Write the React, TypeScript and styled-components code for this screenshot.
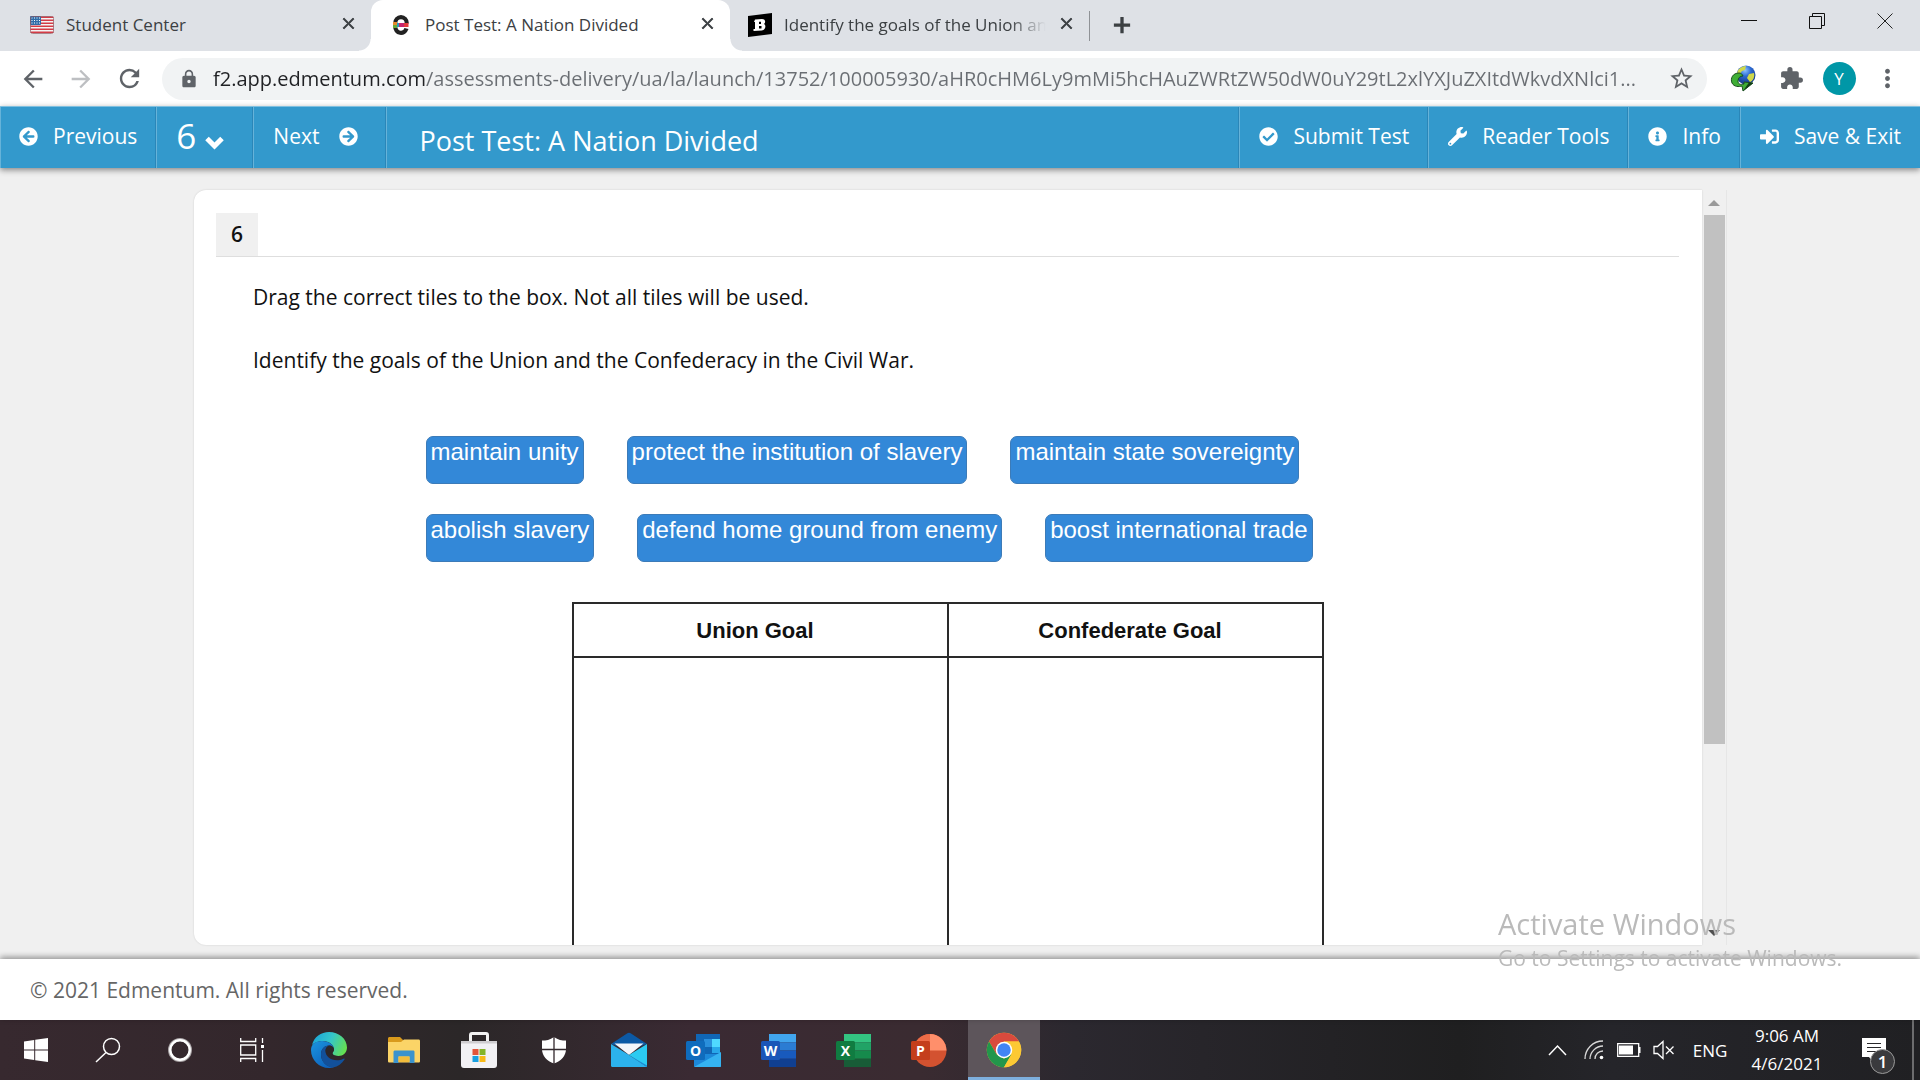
import React from "react";
import styled, { createGlobalStyle, css } from "styled-components";
import {
  FaArrowCircleLeft,
  FaArrowCircleRight,
  FaCheckCircle,
  FaInfoCircle,
  FaSignInAlt,
  FaWrench,
} from "react-icons/fa";
import {
  MdAdd,
  MdArrowBack,
  MdArrowForward,
  MdClose,
  MdExtension,
  MdLock,
  MdMoreVert,
  MdRefresh,
  MdStarBorder,
} from "react-icons/md";

const uiFont = `"Open Sans", "Noto Sans", sans-serif`;
const tileFont = `"Liberation Sans", Arial, sans-serif`;

const GlobalStyle = createGlobalStyle`
  *, *::before, *::after { box-sizing: border-box; }
  body { margin: 0; font-family: ${uiFont}; background: #f0f0f0; }
  button, input, select { font-family: inherit; }
  svg { display: block; flex: none; }
`;

const Screen = styled.div`
  display: flex;
  flex-direction: column;
  height: 100vh;
  overflow: hidden;
`;

const bareButton = css`
  display: flex;
  align-items: center;
  justify-content: center;
  padding: 0;
  border: 0;
  background: none;
  color: inherit;
  cursor: pointer;
`;

/* ---------- Browser tabs ---------- */

const TabStrip = styled.header`
  display: flex;
  flex: none;
  height: 51px;
  padding-left: 12px;
  background: #dee1e6;
  color: #3c4043;
`;

const TabItem = styled.div<{ $active?: boolean }>`
  position: relative;
  display: flex;
  align-items: center;
  gap: 12px;
  width: 359px;
  padding: 0 15px 2px 18px;
  font-size: 17px;
  border-radius: 12px 12px 0 0;
  background: ${(p) => (p.$active ? "#fff" : "none")};

  ${(p) =>
    p.$active &&
    css`
      &::before,
      &::after {
        content: "";
        position: absolute;
        bottom: 0;
        width: 12px;
        height: 12px;
      }
      &::before {
        right: 100%;
        background: radial-gradient(circle at 0 0, #dee1e6 11px, #fff 12px);
      }
      &::after {
        left: 100%;
        background: radial-gradient(circle at 100% 0, #dee1e6 11px, #fff 12px);
      }
    `}
`;

const TabTitle = styled.span<{ $fade?: boolean }>`
  flex: 1;
  overflow: hidden;
  white-space: nowrap;
  ${(p) => p.$fade && "mask-image: linear-gradient(to right, #000 86%, transparent);"}
`;

const IconButton = styled.button<{ $width?: number; $tone?: string }>`
  ${bareButton}
  flex: none;
  width: ${(p) => p.$width ?? 16}px;
  color: ${(p) => p.$tone ?? "#3c4043"};
`;

const StripButton = styled(IconButton)`
  padding-bottom: 2px;

  path:last-child {
    stroke: currentColor;
    stroke-width: 1;
  }
`;

const TabDivider = styled.span`
  width: 1px;
  height: 30px;
  margin-top: 11px;
  background: #8f9296;
`;

const WindowControls = styled.div`
  display: flex;
  height: 42px;
  margin: 0 1px 0 auto;
`;

/* ---------- Address bar ---------- */

const Toolbar = styled.div`
  display: flex;
  align-items: center;
  flex: none;
  height: 55px;
  padding: 0 9px;
  background: #fff;
`;

const Omnibox = styled.div`
  display: flex;
  align-items: center;
  flex: 1;
  height: 42px;
  margin: 0 12px 0 9px;
  padding: 0 12px 0 17px;
  border-radius: 21px;
  background: #f1f3f4;
  color: #5f6368;
`;

const UrlInput = styled.input`
  flex: 1;
  min-width: 0;
  height: 42px;
  margin-left: 14px;
  padding: 0;
  border: 0;
  outline: 0;
  font-size: 20px;
  background: linear-gradient(to right, #202124 212px, #6a6e73 212px);
  background-clip: text;
  -webkit-text-fill-color: transparent;
`;

const Avatar = styled.span`
  display: flex;
  align-items: center;
  justify-content: center;
  width: 33px;
  height: 33px;
  border-radius: 50%;
  background: #0097a7;
  color: #fff;
  font-size: 17px;
`;

/* ---------- Assessment navigation ---------- */

const NavBar = styled.nav`
  position: relative;
  z-index: 1;
  display: flex;
  flex: none;
  height: 62px;
  background: #3399cc;
  border-top: 1px solid #7fc0e0;
  box-shadow: 0 2px 6px rgba(0, 0, 0, 0.45);
  color: #fff;
`;

const navDivider = css`
  border-left: 1px solid #66b3d9;
  box-shadow: -1px 0 0 #2a86b8;
`;

const NavButton = styled.button`
  ${bareButton}
  ${navDivider}
  gap: 15px;
  padding: 0 19px 3px;
  font-size: 21px;
  white-space: nowrap;
`;

const PreviousButton = styled(NavButton)`
  padding-left: 18px;
`;

const NextButton = styled(NavButton)`
  gap: 20px;
  padding-right: 28px;
`;

const QuestionPicker = styled.label`
  ${navDivider}
  display: flex;
  align-items: center;
  gap: 8px;
  padding: 0 29px 3px 19px;

  svg {
    margin-top: 13px;
  }
`;

const QuestionSelect = styled.select`
  appearance: none;
  padding: 0;
  border: 0;
  background: none;
  color: #fff;
  font-size: 35px;
  line-height: 40px;
`;

const NavTitle = styled.h1`
  ${navDivider}
  flex: 1;
  height: 61px;
  margin: 0;
  padding-left: 32px;
  font-size: 27px;
  font-weight: 400;
  line-height: 67px;
  white-space: nowrap;
`;

/* ---------- Question card ---------- */

const Stage = styled.main`
  display: flex;
  flex: 1;
  justify-content: center;
  min-height: 0;
  padding: 22px 0 14px;
  background: #f0f0f0;
`;

const Frame = styled.div`
  display: flex;
  width: 80%;
  padding: 0 1px 0 2px;
  min-height: 0;
`;

const Card = styled.section`
  flex: 1;
  overflow: hidden;
  padding: 23px 23px 0 22px;
  border-radius: 12px 0 0 12px;
  background: #fff;
  box-shadow: 0 0 2px rgba(0, 0, 0, 0.15);
  color: #111;
`;

const CardHead = styled.div`
  display: flex;
  border-bottom: 1px solid #dedede;
`;

const QuestionNumber = styled.h2`
  width: 42px;
  margin: 0;
  background: #f0f0f0;
  font-size: 21px;
  font-weight: 600;
  line-height: 43px;
  text-align: center;
`;

const Prompt = styled.p`
  margin: 0 0 33px;
  font-size: 21px;
  line-height: 30px;
`;

const Prompts = styled.div`
  padding: 25px 0 0 37px;
`;

const TileBank = styled.div`
  display: flex;
  flex-wrap: wrap;
  gap: 30px 43px;
  max-width: 1044px;
  margin: 61px auto 40px;
`;

const Tile = styled.button`
  height: 48px;
  padding: 0 4px 16px;
  border: 1px solid #3c7bb8;
  border-radius: 7px;
  background: #3388d8;
  color: #fff;
  font-family: ${tileFont};
  font-size: 24px;
  line-height: 30px;
  white-space: nowrap;
  cursor: grab;
`;

const GoalTable = styled.table`
  width: 752px;
  max-width: 100%;
  margin: 0 auto;
  border-collapse: collapse;
  table-layout: fixed;
  font-family: ${tileFont};

  th,
  td {
    border: 2px solid #2a2a2a;
  }
  th {
    height: 54px;
    padding: 2px 10px 0 0;
    color: #111;
    font-size: 22px;
    font-weight: 700;
  }
  td {
    height: 480px;
  }
`;

const ScrollRail = styled.div`
  display: flex;
  flex: none;
  flex-direction: column;
  align-items: center;
  width: 25px;
  border-right: 1px solid #e6e6e6;
`;

const ScrollArrow = styled.button`
  ${bareButton}
  width: 21px;
  height: 25px;
`;

const ScrollTrack = styled.div`
  flex: 1;
  width: 21px;
`;

const ScrollThumb = styled.div`
  height: 75%;
  background: #c1c1c1;
`;

const Footer = styled.footer`
  position: relative;
  flex: none;
  height: 61px;
  padding-left: 30px;
  background: #fff;
  box-shadow: 0 -2px 6px rgba(0, 0, 0, 0.4);
  color: #666;
  font-size: 21px;
  line-height: 62px;
`;

const Watermark = styled.aside`
  position: fixed;
  z-index: 2;
  right: 79px;
  bottom: 107px;
  width: 343px;
  color: #bababa;
  white-space: nowrap;
  pointer-events: none;

  strong {
    display: block;
    font-size: 29px;
    font-weight: 400;
    line-height: 38px;
  }
  span {
    display: block;
    font-size: 21px;
    line-height: 30px;
  }
`;

/* ---------- Taskbar ---------- */

const Taskbar = styled.div`
  display: flex;
  flex: none;
  height: 60px;
  background: linear-gradient(to right, #37292f 0%, #33272c 14%, #2b2728 24%, #3a2a33 36%, #3a2b31 48%, #2b282f 56%, #1f1f20 76%, #25252a 84%, #202023 100%);
  color: #fff;
`;

const AppGroup = styled.div<{ $gap: number }>`
  display: flex;
  gap: ${(p) => p.$gap}px;
  margin-right: 5px;
`;

const AppButton = styled.button<{ $open?: boolean }>`
  ${bareButton}
  width: 72px;
  background: ${(p) => (p.$open ? "#5d555b" : "none")};
  box-shadow: ${(p) => (p.$open ? "inset 0 -3px 0 #7eb0de" : "none")};
`;

const Tray = styled.div`
  display: flex;
  align-items: center;
  margin-left: auto;
`;

const TrayButton = styled.button<{ $width: number }>`
  ${bareButton}
  width: ${(p) => p.$width}px;
  height: 60px;
  font-size: 17px;
`;

const Clock = styled.time`
  width: 98px;
  font-size: 17px;
  line-height: 28px;
  text-align: center;
`;

const NoticeButton = styled(TrayButton)`
  position: relative;
`;

const Badge = styled.span`
  position: absolute;
  left: 34px;
  top: 29px;
  width: 25px;
  height: 25px;
  border: 1px solid #9a9a9a;
  border-radius: 50%;
  background: #3a3a3d;
  font-size: 17px;
  font-weight: 600;
  line-height: 23px;
  text-align: center;
`;

const ShowDesktop = styled.button`
  ${bareButton}
  width: 8px;
  height: 60px;
  border-left: 2px solid #6c6c6e;
`;

/* ---------- Drawings ---------- */

const Chevron = () => (
  <svg width="19" height="14" viewBox="0 0 19 14" fill="none" stroke="#fff" strokeWidth="5">
    <path d="m2 2.500 7.500 7.500L17 2.500" />
  </svg>
);

const Flag = () => (
  <svg width="24" height="24" viewBox="0 0 24 24">
    <rect y="3" width="24" height="18" rx="2" fill="#f4f4f4" />
    {[3, 6, 9, 12, 15, 18].map((y) => (
      <rect key={y} x="0.5" y={y + 0.5} width="23" height="1.5" fill="#d33b46" />
    ))}
    <rect y="3" width="11" height="9" rx="1" fill="#2f6ca8" />
    {[4.5, 7, 9.5].map((y) =>
      [1.5, 4, 6.5, 9].map((x) => <rect key={`${x}-${y}`} x={x} y={y} width="1" height="1" fill="#fff" />)
    )}
    <rect x="0.5" y="3.5" width="23" height="17" rx="2" fill="none" stroke="#8b5560" strokeOpacity=".7" />
  </svg>
);

const EdmentumMark = () => (
  <svg width="24" height="24" viewBox="0 0 24 24">
    <path d="M17.500 15.500A5.800 6.300 0 0 1 6.200 13.500V10.500A5.800 6.300 0 0 1 17.800 10.500" fill="none" stroke="#222" strokeWidth="4.200" />
    <rect x="4" y="9" width="4" height="3" fill="#e58a2d" />
    <rect x="4" y="12" width="4" height="3" fill="#6ba93b" />
    <rect x="8" y="10" width="4" height="4" fill="#2a9ac0" />
    <rect x="10" y="10" width="6" height="4" fill="#c6256d" />
    <rect x="15" y="10" width="4.500" height="4" fill="#e23b3b" />
  </svg>
);

const BrainlyMark = () => (
  <svg width="24" height="24" viewBox="0 0 24 24">
    <path d="M0 3 24 0v21L0 24z" fill="#000" />
    <path
      d="M7 6.500 14 6c3.500 0 4 3.500 2 5 2.500 1.500 1.500 6-2 6.500l-8.500.500v-2H7V9H6zM11 8.700v2.300h2V8.700zM11 13v2.500h2.500V13z"
      fill="#fff"
      fillRule="evenodd"
    />
  </svg>
);

const Globe = () => (
  <svg width="26" height="27" viewBox="0 0 26 27">
    <defs>
      <radialGradient id="globeSea" cx="0.450" cy="0.250" r="0.800">
        <stop offset="0" stopColor="#8cc4ff" />
        <stop offset=".4" stopColor="#2b68d0" />
        <stop offset="1" stopColor="#123078" />
      </radialGradient>
    </defs>
    <circle cx="16" cy="10" r="9.500" fill="url(#globeSea)" />
    <path d="M9 4c2-2 5-3 7-3l-1 4-3 1-2 3-3 0c0-2 1-4 2-5zM19 9l5-1c1 4-1 8-4 9l-3-4z" fill="#cfd84a" />
    <path d="M9 8C3 8 0 13 2 18c2 4 7 4 10 3l1 5 10-8-9-1 0 2c-4 1-6 0-6-3s2-5 5-5c-1-2-2-3-4-3z" fill="#3fae35" stroke="#1c4f22" />
    <path d="M13 26l10-8-4-.500z" fill="#123d18" />
  </svg>
);

const WinLogo = () => (
  <svg width="24" height="24" viewBox="0 0 24 24" fill="#fff">
    <path d="M0 3.400 10.200 2v9.500H0zM11.200 1.800 24 0v11.500H11.200zM0 12.500h10.200V22L0 20.600zM11.200 12.500H24V24l-12.800-1.800z" />
  </svg>
);

const SearchGlass = () => (
  <svg width="26" height="26" viewBox="0 0 26 26" fill="none" stroke="#fff" strokeWidth="1.500">
    <circle cx="16.500" cy="9.500" r="8" />
    <path d="M11 15.500 1 25" />
  </svg>
);

const CortanaRing = () => (
  <svg width="26" height="26" viewBox="0 0 26 26" fill="none">
    <circle cx="13" cy="13" r="10.500" stroke="#aaa5a7" strokeWidth="3" />
    <circle cx="13" cy="13" r="9.700" stroke="#fff" strokeWidth="2.400" />
  </svg>
);

const TaskView = () => (
  <svg width="24" height="24" viewBox="0 0 24 24" fill="none" stroke="#fff" strokeWidth="1.300">
    <path d="M.700 0v3.500h15V0M.700 7h15v10h-15zM.700 24v-3.500h15V24M22.500 0v5M22.500 12v12" />
    <rect x="21" y="7" width="3" height="3" fill="#fff" stroke="none" />
  </svg>
);

const EdgeLogo = () => (
  <svg width="36" height="36" viewBox="0 0 36 36">
    <defs>
      <linearGradient id="edgeTop" x1="0" y1="0.300" x2="1" y2="0.600">
        <stop offset="0" stopColor="#1ba5d8" />
        <stop offset=".5" stopColor="#35c6c9" />
        <stop offset="1" stopColor="#66e04f" />
      </linearGradient>
      <linearGradient id="edgeLow" x1="0" y1="0" x2="0.700" y2="1">
        <stop offset="0" stopColor="#1b95de" />
        <stop offset="1" stopColor="#0d62bd" />
      </linearGradient>
    </defs>
    <path d="M1 13C3 5 10 0 18 0c10 0 18 7 18 15.500 0 5-4 8.500-8.500 8.500-4 0-6.500-1.500-6-3 .600-1 1.500-2 1.500-3.500C23 13 18 9 12 9 7 9 3 11 1 13z" fill="url(#edgeTop)" />
    <path d="M0 18C0 12 5 9 11 9c7 0 12 4 12 8.500 0-2-2-4-5-4-5 0-8 4-8 9C10 30 17 36 23 35c-2 .700-4 1-5 1C8 36 0 28 0 18z" fill="url(#edgeLow)" />
    <path d="M18 13.500c-5 0-8 4-8 9C10 30 16 35.500 22 35.500c5-1 9-4 11.500-8 .400-.800-.300-1.200-1-.800C24 31 14 26 14.500 18.500c.200-2.200 1.500-4 3.500-5z" fill="#12509a" />
    <path d="M18 13.500c3 0 5 2 5 4s-2 2.500-1.500 4c.500 1.800 3 2.500 6 2.500-6 2-12.500 0-13-5.500 0-2.200 1.500-4 3.500-5z" fill="#2c2729" />
  </svg>
);

const FolderLogo = () => (
  <svg width="32" height="28" viewBox="0 0 32 28">
    <path d="M0 2.500C0 1.500.800 1 1.500 1H12l3 3v6H0z" fill="#d99a1c" />
    <path d="M0 6h13l3-2.500h14.500c1 0 1.500.700 1.500 1.500v20c0 1-.500 1.500-1.500 1.500h-29C.500 26.500 0 26 0 25z" fill="#fbd467" />
    <path d="M5.500 27V16c0-1 .700-1.500 1.500-1.500h18c1 0 1.500.500 1.500 1.500v11h-5v-6.500h-11V27z" fill="#3b93cd" />
    <rect x="10.500" y="20.500" width="11" height="5.500" fill="#f3bd3c" />
  </svg>
);

const StoreLogo = () => (
  <svg width="36" height="36" viewBox="0 0 36 36">
    <path d="M9.500 10V3c0-1 .700-1.500 1.500-1.500h14c1 0 1.500.500 1.500 1.500v7" fill="none" stroke="#f2f2f2" strokeWidth="3" />
    <path d="M0 9h36v24c0 2-1 3-3 3H3c-2 0-3-1-3-3z" fill="#f2f1f4" />
    <rect y="9" width="36" height="2.500" fill="#cfcdd0" />
    <rect x="11.500" y="17" width="6" height="6" fill="#e35439" />
    <rect x="18.500" y="17" width="6" height="6" fill="#84b427" />
    <rect x="11.500" y="24" width="6" height="6" fill="#1a9fe0" />
    <rect x="18.500" y="24" width="6" height="6" fill="#f7b917" />
  </svg>
);

const ShieldLogo = () => (
  <svg width="26" height="28" viewBox="0 0 26 28">
    <path d="M13 1c4 3 8 3.500 12 3.500V13c0 7-5 12-12 14.500C6 25 1 20 1 13V4.500C5 4.500 9 4 13 1z" fill="#fff" />
    <path d="M13 0v28M0 13.500h26" stroke="#33292d" strokeWidth="1.300" />
  </svg>
);

const MailLogo = () => (
  <svg width="36" height="36" viewBox="0 0 36 36">
    <path d="M0 12 16 1.500q2-1.500 4 0L36 12l-18 6z" fill="#0c59a4" />
    <path d="M3.500 11.500h29L18 23z" fill="#f4f6fa" />
    <path d="M0 12v21.500q0 1.500 1.500 1.500H36L18 23z" fill="#2cb2ec" />
    <path d="M18 23 36 12v23z" fill="#2bcbf2" />
    <path d="M18 23l18 12V33.500z" fill="#1a86d6" />
  </svg>
);

const LetterPlate = ({ letter, fill }: { letter: string; fill: string }) => (
  <>
    <rect x="0" y="9" width="19" height="19" rx="1.500" fill={fill} />
    <text x="9.500" y="23.500" fill="#fff" fontFamily={uiFont} fontSize="14" fontWeight="700" textAnchor="middle">
      {letter}
    </text>
  </>
);

const OutlookLogo = () => (
  <svg width="36" height="36" viewBox="0 0 36 36">
    <path d="M10 2h24v20H10z" fill="#1066b5" />
    <path d="M18 7h8v8h-8z" fill="#2a8fdc" />
    <path d="M26 7h8v8h-8z" fill="#50d9ff" />
    <path d="M26 15h8v6h-8z" fill="#28a8ea" />
    <path d="M8 22h27v12q0 1-1 1H9q-1 0-1-1z" fill="#1c88d9" />
    <path d="M8 35 35 20v14q0 1-1 1z" fill="#35b3f1" />
    <LetterPlate letter="O" fill="#0f6cbd" />
  </svg>
);

const SheetLogo = ({ letter, plate, bands }: { letter: string; plate: string; bands: string[] }) => (
  <svg width="36" height="36" viewBox="0 0 36 36">
    {bands.map((fill, i) => (
      <rect key={fill} x="8" y={2 + i * 8.25} width="27" height="8.300" fill={fill} />
    ))}
    <LetterPlate letter={letter} fill={plate} />
  </svg>
);

const PowerPointLogo = () => (
  <svg width="36" height="36" viewBox="0 0 36 36">
    <circle cx="19" cy="18.500" r="16.500" fill="#d35230" />
    <path d="M19 2a16.500 16.500 0 0 1 16.500 16.500H19z" fill="#ff8f6b" />
    <path d="M19 2v16.500H2.500A16.500 16.500 0 0 1 19 2z" fill="#ed6c47" />
    <LetterPlate letter="P" fill="#c43e1c" />
  </svg>
);

const ChromeLogo = () => (
  <svg width="36" height="36" viewBox="0 0 48 48">
    <circle cx="24" cy="24" r="23" fill="#fcc934" />
    <path d="M4.100 12.500A23 23 0 0 1 43.900 12.500H24l-10 17.200z" fill="#d94a3d" />
    <path d="M4.100 12.500 14 29.700 24 35.500 34 29.700 24 47A23 23 0 0 1 4.100 12.500z" fill="#22964b" />
    <path d="M24 12.500h19.900A23 23 0 0 1 24 47l10-17.300z" fill="#fcc934" />
    <circle cx="24" cy="24" r="11" fill="#fff" />
    <circle cx="24" cy="24" r="9" fill="#4285f4" />
  </svg>
);

const CaretUp = () => (
  <svg width="19" height="12" viewBox="0 0 19 12" fill="none" stroke="#fff" strokeWidth="1.500">
    <path d="m1 11 8.500-9L18 11" />
  </svg>
);

const Wifi = () => (
  <svg width="20" height="20" viewBox="0 0 20 20" fill="none" stroke="#d8d8d8" strokeWidth="1.300">
    <path d="M1 19C1 9 9 1 19 1M6 19C6 12 12 6 19 6M11 19c0-4.500 3.500-8 8-8" />
    <circle cx="17.500" cy="17.500" r="1.800" fill="#fff" stroke="none" />
  </svg>
);

const Battery = () => (
  <svg width="24" height="14" viewBox="0 0 24 14">
    <path d="M.700.700h21v12.600h-21z" fill="none" stroke="#fff" strokeWidth="1.300" />
    <rect x="2" y="2.500" width="14" height="9" fill="#fff" />
    <rect x="22" y="4" width="1.500" height="6" fill="#fff" />
  </svg>
);

const Muted = () => (
  <svg width="22" height="20" viewBox="0 0 22 20" fill="none" stroke="#fff" strokeWidth="1.300">
    <path d="M1 6.500h3.500L10 1.500v17l-5.500-5H1zM13 6.500l7.500 7.500M20.500 6.500 13 14" />
  </svg>
);

const NoticeIcon = () => (
  <svg width="24" height="25" viewBox="0 0 24 25">
    <path d="M0 0h24v19H14l-3 5-4-5H0z" fill="#fff" />
    <path d="M5 5.500h14M5 9.500h14M5 13.500h9" stroke="#28282b" strokeWidth="1.200" />
  </svg>
);

const Minimize = () => (
  <svg width="16" height="16" viewBox="0 0 16 16" stroke="#111" fill="none">
    <path d="M0 7.500h16" />
  </svg>
);

const Restore = () => (
  <svg width="16" height="16" viewBox="0 0 16 16" stroke="#111" fill="none">
    <path d="M.500 3.500h12v12H.500zM3.500 3V.500h12v12H13" />
  </svg>
);

const CloseWindow = () => (
  <svg width="16" height="16" viewBox="0 0 16 16" stroke="#222" fill="none">
    <path d="m.500.500 15 15M15.500.500l-15 15" />
  </svg>
);

const Triangle = ({ down }: { down?: boolean }) => (
  <svg width="12" height="6" viewBox="0 0 12 6">
    <path d={down ? "M0 0h12L6 6z" : "M0 6h12L6 0z"} fill={down ? "#505050" : "#9a9a9a"} />
  </svg>
);

/* ---------- Data ---------- */

const tabs = [
  { title: "Student Center", icon: <Flag /> },
  { title: "Post Test: A Nation Divided", icon: <EdmentumMark />, active: true },
  { title: "Identify the goals of the Union an", icon: <BrainlyMark />, fade: true },
];

const tiles = [
  "maintain unity",
  "protect the institution of slavery",
  "maintain state sovereignty",
  "abolish slavery",
  "defend home ground from enemy",
  "boost international trade",
];

const navActions = [
  { label: "Submit Test", Icon: FaCheckCircle },
  { label: "Reader Tools", Icon: FaWrench },
  { label: "Info", Icon: FaInfoCircle },
  { label: "Save & Exit", Icon: FaSignInAlt },
];

const systemApps = [
  { name: "Start", icon: <WinLogo /> },
  { name: "Search", icon: <SearchGlass /> },
  { name: "Cortana", icon: <CortanaRing /> },
  { name: "Task View", icon: <TaskView /> },
];

const pinnedApps = [
  { name: "Edge", icon: <EdgeLogo /> },
  { name: "File Explorer", icon: <FolderLogo /> },
  { name: "Store", icon: <StoreLogo /> },
  { name: "Security", icon: <ShieldLogo /> },
  { name: "Mail", icon: <MailLogo /> },
  { name: "Outlook", icon: <OutlookLogo /> },
  { name: "Word", icon: <SheetLogo letter="W" plate="#1a56b8" bands={["#41a5ee", "#2b7cd3", "#185abd", "#103f91"]} /> },
  { name: "Excel", icon: <SheetLogo letter="X" plate="#107c41" bands={["#33c481", "#21a366", "#168a4c", "#185c37"]} /> },
  { name: "PowerPoint", icon: <PowerPointLogo /> },
  { name: "Chrome", icon: <ChromeLogo />, open: true },
];

const pageUrl =
  "f2.app.edmentum.com/assessments-delivery/ua/la/launch/13752/100005930/aHR0cHM6Ly9mMi5hcHAuZWRtZW50dW0uY29tL2xlYXJuZXItdWkvdXNlci1...";

export default function App() {
  return (
    <Screen>
      <GlobalStyle />
      <TabStrip>
        {tabs.map((tab) => (
          <TabItem key={tab.title} $active={tab.active}>
            {tab.icon}
            <TabTitle $fade={tab.fade}>{tab.title}</TabTitle>
            <StripButton aria-label="Close tab">
              <MdClose size={19} />
            </StripButton>
          </TabItem>
        ))}
        <TabDivider />
        <StripButton $width={64} aria-label="New tab">
          <MdAdd size={26} />
        </StripButton>
        <WindowControls>
          <IconButton $width={68} aria-label="Minimize"><Minimize /></IconButton>
          <IconButton $width={68} aria-label="Restore"><Restore /></IconButton>
          <IconButton $width={68} aria-label="Close"><CloseWindow /></IconButton>
        </WindowControls>
      </TabStrip>

      <Toolbar>
        <IconButton $width={48} $tone="#5f6368" aria-label="Back"><MdArrowBack size={28} /></IconButton>
        <IconButton $width={48} $tone="#bdbfc2" aria-label="Forward"><MdArrowForward size={28} /></IconButton>
        <IconButton $width={48} $tone="#5f6368" aria-label="Reload"><MdRefresh size={29} /></IconButton>
        <Omnibox>
          <MdLock size={20} />
          <UrlInput aria-label="Address" defaultValue={pageUrl} spellCheck={false} />
          <IconButton $width={28} $tone="#5f6368" aria-label="Bookmark"><MdStarBorder size={27} /></IconButton>
        </Omnibox>
        <IconButton $width={48} aria-label="Download manager"><Globe /></IconButton>
        <IconButton $width={48} $tone="#5f6368" aria-label="Extensions"><MdExtension size={25} /></IconButton>
        <IconButton $width={48} aria-label="Profile"><Avatar>Y</Avatar></IconButton>
        <IconButton $width={48} $tone="#5f6368" aria-label="Menu"><MdMoreVert size={29} /></IconButton>
      </Toolbar>

      <NavBar>
        <PreviousButton><FaArrowCircleLeft size={19} />Previous</PreviousButton>
        <QuestionPicker>
          <QuestionSelect aria-label="Question" defaultValue="6">
            <option>6</option>
          </QuestionSelect>
          <Chevron />
        </QuestionPicker>
        <NextButton>Next<FaArrowCircleRight size={19} /></NextButton>
        <NavTitle>Post Test: A Nation Divided</NavTitle>
        {navActions.map(({ label, Icon }) => (
          <NavButton key={label}><Icon size={19} />{label}</NavButton>
        ))}
      </NavBar>

      <Stage>
        <Frame>
          <Card>
            <CardHead>
              <QuestionNumber>6</QuestionNumber>
            </CardHead>
            <Prompts>
              <Prompt>Drag the correct tiles to the box. Not all tiles will be used.</Prompt>
              <Prompt>Identify the goals of the Union and the Confederacy in the Civil War.</Prompt>
            </Prompts>
            <TileBank>
              {tiles.map((tile) => (
                <Tile key={tile} draggable>{tile}</Tile>
              ))}
            </TileBank>
            <GoalTable>
              <thead>
                <tr>
                  <th>Union Goal</th>
                  <th>Confederate Goal</th>
                </tr>
              </thead>
              <tbody>
                <tr>
                  <td />
                  <td />
                </tr>
              </tbody>
            </GoalTable>
          </Card>
          <ScrollRail>
            <ScrollArrow aria-label="Scroll up"><Triangle /></ScrollArrow>
            <ScrollTrack><ScrollThumb /></ScrollTrack>
            <ScrollArrow aria-label="Scroll down"><Triangle down /></ScrollArrow>
          </ScrollRail>
        </Frame>
      </Stage>

      <Footer>© 2021 Edmentum. All rights reserved.</Footer>

      <Taskbar>
        <AppGroup $gap={0}>
          {systemApps.map((app) => (
            <AppButton key={app.name} aria-label={app.name}>{app.icon}</AppButton>
          ))}
        </AppGroup>
        <AppGroup $gap={3}>
          {pinnedApps.map((app) => (
            <AppButton key={app.name} aria-label={app.name} $open={app.open}>{app.icon}</AppButton>
          ))}
        </AppGroup>
        <Tray>
          <TrayButton $width={38} aria-label="Show hidden icons"><CaretUp /></TrayButton>
          <TrayButton $width={36} aria-label="Network"><Wifi /></TrayButton>
          <TrayButton $width={34} aria-label="Battery"><Battery /></TrayButton>
          <TrayButton $width={36} aria-label="Volume"><Muted /></TrayButton>
          <TrayButton $width={56}>ENG</TrayButton>
          <Clock>9:06 AM<br />4/6/2021</Clock>
          <NoticeButton $width={76} aria-label="Notifications">
            <NoticeIcon />
            <Badge>1</Badge>
          </NoticeButton>
          <ShowDesktop aria-label="Show desktop" />
        </Tray>
      </Taskbar>

      <Watermark>
        <strong>Activate Windows</strong>
        <span>Go to Settings to activate Windows.</span>
      </Watermark>
    </Screen>
  );
}
